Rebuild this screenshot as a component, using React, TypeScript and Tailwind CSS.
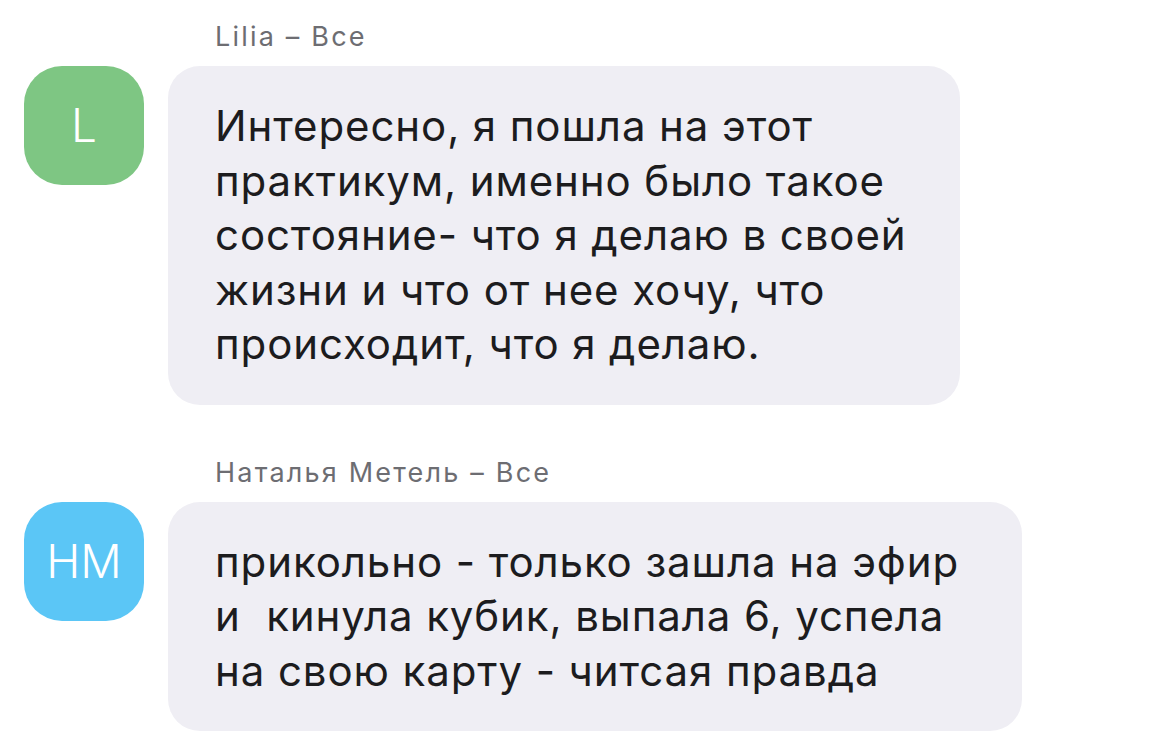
import React from 'react';

const messages = [
  {
    name: 'Lilia – Все',
    initials: 'L',
    avatar: 'bg-[#7ec683]',
    width: 'w-[792px]',
    lines: [
      'Интересно, я пошла на этот',
      'практикум, именно было такое',
      'состояние- что я делаю в своей',
      'жизни и что от нее хочу, что',
      'происходит, что я делаю.',
    ],
  },
  {
    name: 'Наталья Метель – Все',
    initials: 'НМ',
    avatar: 'bg-[#5bc6f6]',
    width: 'w-[854px]',
    lines: [
      'прикольно - только зашла на эфир',
      'и  кинула кубик, выпала 6, успела',
      'на свою карту - читсая правда',
    ],
  },
];

export default function App() {
  return (
    <div className="min-h-screen bg-white pl-[24px] pt-[22px] font-['Inter','Liberation_Sans',sans-serif]">
      <div className="flex flex-col gap-[53px]">
        {messages.map((m) => (
          <div key={m.name} className="flex flex-col">
            <div className="ml-[191px] mb-[14px] h-[30px] text-[27px] leading-[30px] tracking-[2.2px] text-[#6d6d72]">
              {m.name}
            </div>
            <div className="flex items-start gap-[24px]">
              <div
                className={`${m.avatar} w-[120px] h-[119px] shrink-0 rounded-[38px] flex items-center justify-center text-white text-[46px] font-light`}
              >
                {m.initials}
              </div>
              <div
                className={`${m.width} rounded-[32px] bg-[#efeef4] pl-[47px] pr-[30px] pt-[33px] pb-[33px] text-[42px] leading-[54.5px] tracking-[0.9px] text-[#1c1c1e] whitespace-pre`}
              >
                {m.lines.map((l, i) => (
                  <div key={i}>{l}</div>
                ))}
              </div>
            </div>
          </div>
        ))}
      </div>
    </div>
  );
}
